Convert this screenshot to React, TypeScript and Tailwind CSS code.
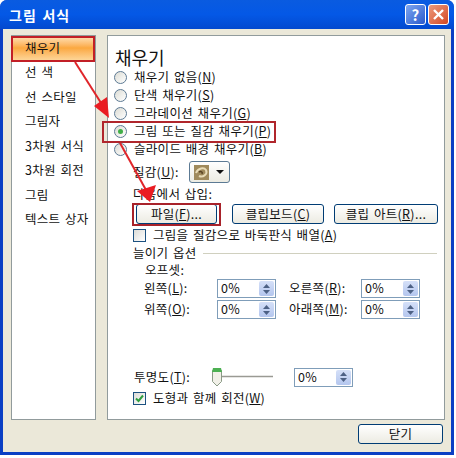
const font = '"Noto Sans CJK KR", "Liberation Sans", sans-serif';

const menuItems = ['선 색', '선 스타일', '그림자', '3차원 서식', '3차원 회전', '그림', '텍스트 상자'];

function Radio({ label, hot, rest, checked }: { label: string; hot: string; rest?: string; checked?: boolean }) {
  return (
    <div className="flex h-[18px] items-center pl-[6px]">
      <span className="mr-[7px] flex h-[13px] w-[13px] items-center justify-center rounded-full border border-[#5d7a94] bg-gradient-to-br from-[#dcdcd4] to-white">
        {checked && <span className="h-[5px] w-[5px] rounded-full bg-[#3fae47]" />}
      </span>
      <span>
        {label}(<u>{hot}</u>){rest}
      </span>
    </div>
  );
}

function XpButton({ children, className }: { children: React.ReactNode; className: string }) {
  return (
    <div
      className={`flex h-[20px] items-center justify-center rounded-[3px] border border-[#003c74] bg-gradient-to-b from-white to-[#ecebe2] ${className}`}
    >
      {children}
    </div>
  );
}

function Spin({ className }: { className?: string }) {
  return (
    <div className={`flex h-[19px] w-[59px] items-center justify-between border border-[#7f9db9] bg-white pl-[3px] pr-[1px] ${className ?? ''}`}>
      <span>0%</span>
      <span className="flex h-[15px] w-[15px] flex-col items-center justify-center gap-[2px] rounded-[2px] bg-gradient-to-b from-[#d5e0f8] to-[#b4c6ee]">
        <svg width="7" height="4" viewBox="0 0 7 4"><path d="M3.5 0 7 4H0z" fill="#4d6185" /></svg>
        <svg width="7" height="4" viewBox="0 0 7 4"><path d="M3.5 4 7 0H0z" fill="#4d6185" /></svg>
      </span>
    </div>
  );
}

function SpinRow({ left, leftHot, right, rightHot }: { left: string; leftHot: string; right: string; rightHot: string }) {
  return (
    <div className="flex h-[21px] items-center pl-[36px]">
      <span className="w-[73px]">{left}(<u>{leftHot}</u>):</span>
      <Spin />
      <span className="ml-[13px] w-[72px]">{right}(<u>{rightHot}</u>):</span>
      <Spin />
    </div>
  );
}

function Annotations() {
  return (
    <>
      <div className="absolute left-[11px] top-[36px] h-[26px] w-[84px] border-[2px] border-[#c21f26]" />
      <div className="absolute left-[102px] top-[121px] h-[22px] w-[174px] border-[2px] border-[#b0262c]" />
      <div className="absolute left-[132px] top-[203px] h-[23px] w-[89px] border-[2px] border-[#a8222a]" />
      <svg className="absolute left-0 top-0" width="456" height="458" viewBox="0 0 456 458" fill="none">
        <path d="M75 62 103 106" stroke="#e0252a" strokeWidth="2" />
        <path d="M109 118 94 106 107 97z" fill="#ea1c22" />
        <path d="M120 143 146 190" stroke="#e0252a" strokeWidth="2" />
        <path d="M150 202 137 191 156 185z" fill="#ea1c22" />
      </svg>
    </>
  );
}

export default function App() {
  return (
    <div
      className="relative h-[458px] w-[456px] overflow-hidden bg-white text-[12.5px] leading-none tracking-[0.3px] text-[#111] [word-spacing:1.5px]"
      style={{ fontFamily: font }}
    >
      <div className="flex h-[455px] w-[454px] flex-col rounded-t-[7px] bg-[#0a3fc4]">
        <div className="flex h-[29px] shrink-0 items-center justify-between rounded-t-[7px] bg-gradient-to-b from-[#0a5be0] via-[#0458e6] to-[#0349cf] pl-[9px] pr-[5px]">
          <span className="text-[14px] font-bold tracking-[1px] text-white">그림 서식</span>
          <div className="flex gap-[2px]">
            <span className="flex h-[21px] w-[21px] items-center justify-center rounded-[3px] border border-white bg-gradient-to-br from-[#7fa6ef] to-[#2a58cc] text-[15px] font-bold text-white">?</span>
            <span className="flex h-[21px] w-[21px] items-center justify-center rounded-[3px] border border-white bg-gradient-to-br from-[#ec9a7c] to-[#d2451f]">
              <svg width="13" height="13" viewBox="0 0 13 13"><path d="M2 2 11 11M11 2 2 11" stroke="#fff" strokeWidth="2.4" /></svg>
            </span>
          </div>
        </div>
        <div className="mx-[3px] mb-[3px] flex flex-1 flex-col bg-[#ebe8d9] pl-[8px] pr-[6px] pt-[6px]">
          <div className="flex h-[385px] gap-[11px]">
            <div className="w-[85px] border border-[#919b9c] bg-white">
              <div className="flex h-[24px] items-center bg-gradient-to-b from-[#fde3b8] via-[#fba83e] to-[#fdd596] pl-[13px]">채우기</div>
              <div className="flex flex-col">
                {menuItems.map((item) => (
                  <div key={item} className="flex h-[24.5px] items-center whitespace-pre pl-[13px]">
                    {item}
                  </div>
                ))}
              </div>
            </div>
            <div className="flex flex-1 flex-col border border-[#919b9c] bg-white">
              <div className="flex h-[31px] items-end pb-[1px] pl-[7px] text-[18px] tracking-normal">채우기</div>
              <div className="mt-[1px] flex flex-col">
                <Radio label="채우기 없음" hot="N" />
                <Radio label="단색 채우기" hot="S" />
                <Radio label="그라데이션 채우기" hot="G" />
                <Radio label="그림 또는 질감 채우기" hot="P" checked />
                <Radio label="슬라이드 배경 채우기" hot="B" />
              </div>
              <div className="mt-[3px] flex h-[22px] items-center pl-[25px]">
                <span className="mr-[10px]">질감(<u>U</u>):</span>
                <div className="flex h-[22px] w-[41px] items-center gap-[7px] rounded-[3px] border border-[#5c7a94] bg-gradient-to-b from-white to-[#ecebe2] pl-[4px]">
                  <svg width="15" height="15" viewBox="0 0 15 15">
                    <rect width="15" height="15" fill="#a08a5c" />
                    <path d="M2 8c2-5 8-6 10-3 2 4-3 8-7 6" stroke="#e9dcb8" strokeWidth="2" fill="none" />
                    <path d="M5 7c2-1 4 0 3 2" stroke="#5a4424" strokeWidth="1.5" fill="none" />
                  </svg>
                  <svg width="8" height="4" viewBox="0 0 8 4"><path d="M0 0h8L4 4z" fill="#111" /></svg>
                </div>
              </div>
              <div className="mt-[3px] flex h-[16px] items-center pl-[25px]">다음에서 삽입:</div>
              <div className="mt-[2px] flex h-[20px] pl-[28px]">
                <XpButton className="w-[81px]">파일(<u>F</u>)...</XpButton>
                <XpButton className="ml-[15px] w-[92px]">클립보드(<u>C</u>)</XpButton>
                <XpButton className="ml-[10px] w-[104px]">클립 아트(<u>R</u>)...</XpButton>
              </div>
              <div className="mt-[2px] flex h-[18px] items-center pl-[25px]">
                <span className="mr-[7px] h-[13px] w-[13px] border border-[#1c5180] bg-gradient-to-br from-[#dcdcd7] to-white" />
                그림을 질감으로 바둑판식 배열(<u>A</u>)
              </div>
              <div className="mt-[1px] flex h-[16px] items-center pl-[25px]">
                <span>늘이기 옵션</span>
                <span className="ml-[6px] mr-[7px] h-px flex-1 bg-[#d0d0bf]" />
              </div>
              <div className="mt-[1px] flex h-[16px] items-center pl-[37px]">오프셋:</div>
              <SpinRow left="왼쪽" leftHot="L" right="오른쪽" rightHot="R" />
              <SpinRow left="위쪽" leftHot="O" right="아래쪽" rightHot="M" />
              <div className="mt-[47px] flex h-[20px] items-center pl-[26px]">
                <span className="w-[77px]">투명도(<u>T</u>):</span>
                <svg width="62" height="20" viewBox="0 0 62 20">
                  <path d="M6 9.5H62" stroke="#9a9a94" strokeWidth="1.5" />
                  <path d="M1.5 3.5h9v11l-4.5 4.5-4.5-4.5z" fill="#f1f0e8" stroke="#8a9a86" />
                  <path d="M2 1h8l1 4H1z" fill="#4cb052" />
                </svg>
                <Spin className="ml-[21px]" />
              </div>
              <div className="mt-[2px] flex h-[18px] items-center pl-[25px]">
                <span className="mr-[7px] flex h-[13px] w-[13px] items-center justify-center border border-[#1c5180] bg-gradient-to-br from-[#dcdcd7] to-white">
                  <svg width="9" height="9" viewBox="0 0 9 9"><path d="M1 4.5 3.5 7 8 1.5" stroke="#2f9e3f" strokeWidth="2" fill="none" /></svg>
                </span>
                도형과 함께 회전(<u>W</u>)
              </div>
            </div>
          </div>
          <div className="mr-[2px] mt-[4px] flex justify-end">
            <XpButton className="w-[85px]">닫기</XpButton>
          </div>
        </div>
      </div>
      <Annotations />
    </div>
  );
}
